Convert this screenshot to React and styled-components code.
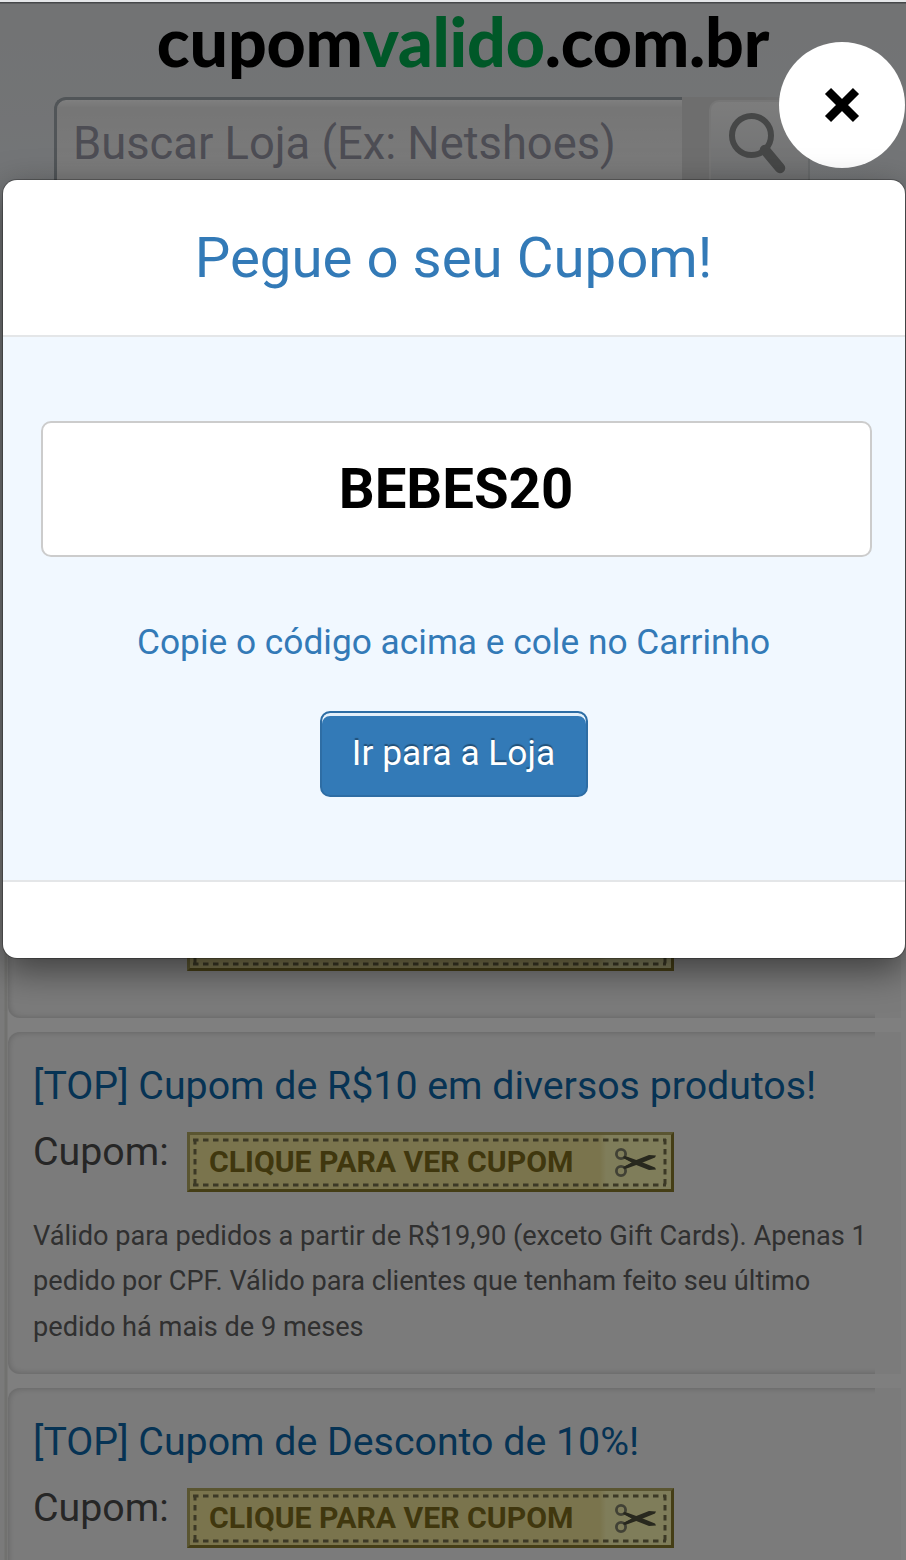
/*
 * CouponPage
 *
 * Store page with its list of coupons and the coupon code dialog on top
 */

import React from 'react';
import styled, { createGlobalStyle } from 'styled-components';

const GlobalStyle = createGlobalStyle`
  * {
    box-sizing: border-box;
  }

  body {
    margin: 0;
    background: #fff;
    font-family: Roboto, 'Liberation Sans', sans-serif;
  }
`;

const Page = styled.div`
  position: relative;
  display: flex;
  flex-direction: column;
  width: 906px;
  height: 1560px;
  overflow: hidden;
  background: #fff;
`;

const Header = styled.header`
  height: 811px;
  flex-shrink: 0;
  border-top: 2px solid #e4e6e8;
  background: linear-gradient(#8c9094 1px, #e4e6e8 2px, #e6e9ec 120px, #e8ecf0 180px);
`;

const Logo = styled.div`
  display: flex;
  justify-content: center;
  height: 95px;
  padding-left: 20px;
  font-family: Lato, sans-serif;
  font-size: 68px;
  font-weight: 900;
  line-height: 78px;
  letter-spacing: -0.2px;
  color: #000;
`;

const LogoAccent = styled.span`
  color: #00b050;
`;

const SearchBar = styled.div`
  display: flex;
  width: 756px;
  margin-left: 54px;
`;

const SearchInput = styled.div`
  width: 628px;
  height: 110px;
  padding: 19px 0 0 16px;
  border: 3px solid #a2aab0;
  border-width: 3px 0 0 3px;
  border-radius: 12px 0 0 0;
  background: linear-gradient(#fff, #ececec 8px, #f8f8f8 80px);
  font-size: 45.3px;
  line-height: 50px;
  color: #9a9aa8;
  white-space: nowrap;
`;

const SearchAddon = styled.div`
  display: flex;
  justify-content: flex-end;
  width: 128px;
  height: 110px;
  padding-top: 3px;
  background: linear-gradient(90deg, #dcdcdc 60%, #e4e6e8);
`;

const SearchButton = styled.div`
  width: 101px;
  height: 106px;
  padding: 10px 0 0 18px;
  border-radius: 10px;
  border: 2px solid #ececec;
  border-right-color: #cfd2d4;
  background: linear-gradient(#fafafa, #e0e2e4 78px);
`;

const CouponList = styled.main`
  display: flex;
  flex-direction: column;
  gap: 14px;
  flex: 1;
  margin-right: 5px;
  padding-left: 8px;
  background: linear-gradient(90deg, #f4f4f4 4px, #e2e3de 5px, #e2e3de 7px, #fff 8px);
`;

const Card = styled.section`
  flex-shrink: 0;
  height: ${(props) => props.$height}px;
  padding-right: 26px;
  border-radius: 10px 0 0 10px;
  background: #f7f7f7;
`;

const CardBody = styled.div`
  position: relative;
  display: flex;
  flex-direction: column;
  height: 100%;
  padding: 30px 0 0 25px;
  overflow: hidden;

  /* wider than the body, so that the right side stays open */
  &::before {
    content: '';
    position: absolute;
    inset: 0 -30px 0 0;
    border-radius: 12px;
    box-shadow: inset 0 0 7px rgba(0, 0, 0, 0.22);
  }
`;

const CardTitle = styled.h3`
  margin: 0 0 15px;
  height: 55px;
  font-size: 39.3px;
  font-weight: 400;
  line-height: 48px;
  color: #0d66a8;
  white-space: nowrap;
`;

const CouponRow = styled.div`
  display: flex;
  height: 60px;
  flex-shrink: 0;
`;

const CouponLabel = styled.span`
  width: 154px;
  font-size: 39.3px;
  line-height: 41px;
  color: #4c4c4c;
`;

const CouponButton = styled.div`
  position: relative;
  display: flex;
  width: 487px;
  height: 60px;
  border: 3px solid;
  border-color: #b4ab62 #8a7c2c #8a7c2c #b4ab62;
  background: linear-gradient(90deg, #f4e99b 410px, #fffab4 416px);
  font-size: 30.2px;
  font-weight: 700;
  line-height: 54px;
  color: #806f1c;
  white-space: nowrap;
`;

const CouponText = styled.span`
  width: 405px;
  padding-left: 19px;
`;

const Stitches = styled.svg`
  position: absolute;
  top: 0;
  left: 0;
`;

const ScissorsIcon = styled.svg`
  margin: 12px 0 0 19px;
`;

const Description = styled.p`
  margin: 22px 0 0;
  font-size: 27.17px;
  line-height: 45.4px;
  color: #606060;
  white-space: nowrap;
`;

const Backdrop = styled.div`
  position: absolute;
  inset: 2px 0 0;
  display: flex;
  flex-direction: column;
  align-items: flex-end;
  padding: 39.5px 1.5px 0 2px;
  background: rgba(0, 0, 0, 0.5);
`;

const CloseButton = styled.button`
  display: flex;
  align-items: center;
  justify-content: center;
  width: 126px;
  height: 126px;
  margin: 0 0 12.5px;
  padding: 0;
  border: 0;
  border-radius: 50%;
  background: #fff;
`;

const Dialog = styled.div`
  width: 902px;
  height: 778px;
  border-radius: 14px;
  background: #fff;
  box-shadow: 0 0 0 1px rgba(0, 0, 0, 0.25), 0 12px 36px rgba(0, 0, 0, 0.5);
`;

const DialogTitle = styled.h2`
  margin: 0;
  height: 157px;
  padding-top: 43px;
  border-bottom: 2px solid #e4e6e8;
  font-size: 56.4px;
  font-weight: 400;
  line-height: 70px;
  text-align: center;
  color: #337ab7;
`;

const DialogBody = styled.div`
  display: flex;
  flex-direction: column;
  align-items: center;
  height: 545px;
  padding-top: 84px;
  border-bottom: 2px solid #e4e6e8;
  background: #f1f8ff;
`;

const CodeField = styled.div`
  width: 831px;
  height: 135.5px;
  margin-left: 5px;
  border: 2px solid #ccc;
  border-radius: 10px;
  background: #fff;
  font-size: 56.3px;
  font-weight: 700;
  line-height: 132px;
  text-align: center;
  color: #000;
`;

const Hint = styled.p`
  margin: 60.5px 0 44px;
  font-size: 35.3px;
  line-height: 50px;
  color: #337ab7;
`;

const StoreButton = styled.button`
  width: 268px;
  height: 85.5px;
  padding: 0 0 2px;
  border: 2px solid #2e6da4;
  border-radius: 10px;
  background: #337ab7;
  box-shadow: inset 0 3px 0 #e4f0fa;
  font-family: inherit;
  font-size: 35.3px;
  text-shadow: 0 -2px 1px rgba(0, 0, 0, 0.35);
  color: #fff;
`;

const Coupon = () => (
  <CouponButton>
    <Stitches width="481" height="54" fill="none" stroke="#78734c" strokeWidth="3" strokeDasharray="5.5 4.5">
      <path d="M3 5H476M3 50H476M5 4V51M475 4V51" />
    </Stitches>
    <CouponText>CLIQUE PARA VER CUPOM</CouponText>
    <ScissorsIcon width="44" height="32" viewBox="0 0 44 32">
      <g fill="none" stroke="#83836a" strokeWidth="2.8">
        <circle cx="7" cy="7" r="4.6" />
        <circle cx="7" cy="24" r="4.6" />
      </g>
      <path d="M10 9L21 13.5L35 8L42 8.5L41 10.5L25 17L14 21L11 22L10 20L18 15.5L9 11Z" fill="#50503c" />
      <path d="M10 22L21 17.5L35 23L42 22.5L41 20.5L25 14L14 10L11 9L10 11L18 15.5L9 20Z" fill="#50503c" />
    </ScissorsIcon>
  </CouponButton>
);

const CouponCard = ({ title, description, height }) => (
  <Card $height={height}>
    <CardBody>
      <CardTitle>{title}</CardTitle>
      <CouponRow>
        <CouponLabel>{title ? 'Cupom:' : null}</CouponLabel>
        <Coupon />
      </CouponRow>
      {description ? (
        <Description>
          {description.map((line) => (
            <React.Fragment key={line}>
              {line}
              <br />
            </React.Fragment>
          ))}
        </Description>
      ) : null}
    </CardBody>
  </Card>
);

const coupons = [
  { id: 1, height: 207 },
  {
    id: 2,
    height: 342,
    title: '[TOP] Cupom de R$10 em diversos produtos!',
    description: [
      'Válido para pedidos a partir de R$19,90 (exceto Gift Cards). Apenas 1',
      'pedido por CPF. Válido para clientes que tenham feito seu último',
      'pedido há mais de 9 meses',
    ],
  },
  { id: 3, height: 342, title: '[TOP] Cupom de Desconto de 10%!' },
];

const CouponDialog = () => (
  <Backdrop>
    <CloseButton aria-label="Fechar">
      <svg width="36" height="36" viewBox="0 0 36 36" stroke="#000" strokeWidth="8.6">
        <path d="M4 4L32 32M32 4L4 32" />
      </svg>
    </CloseButton>
    <Dialog>
      <DialogTitle>Pegue o seu Cupom!</DialogTitle>
      <DialogBody>
        <CodeField>BEBES20</CodeField>
        <Hint>Copie o código acima e cole no Carrinho</Hint>
        <StoreButton>Ir para a Loja</StoreButton>
      </DialogBody>
    </Dialog>
  </Backdrop>
);

export default function App() {
  return (
    <>
      <GlobalStyle />
      <Page>
        <Header>
          <Logo>
            cupom<LogoAccent>valido</LogoAccent>.com.br
          </Logo>
          <SearchBar>
            <SearchInput>Buscar Loja (Ex: Netshoes)</SearchInput>
            <SearchAddon>
              <SearchButton>
                <svg width="60" height="64" viewBox="0 0 60 64" fill="none" stroke="#8c8e8e">
                  <circle cx="22.5" cy="23.5" r="19.5" strokeWidth="6" />
                  <path d="M36 38L51 56" strokeWidth="10.5" strokeLinecap="round" />
                </svg>
              </SearchButton>
            </SearchAddon>
          </SearchBar>
        </Header>
        <CouponList>
          {coupons.map((coupon) => <CouponCard key={coupon.id} {...coupon} />)}
        </CouponList>
      </Page>
      <CouponDialog />
    </>
  );
}
